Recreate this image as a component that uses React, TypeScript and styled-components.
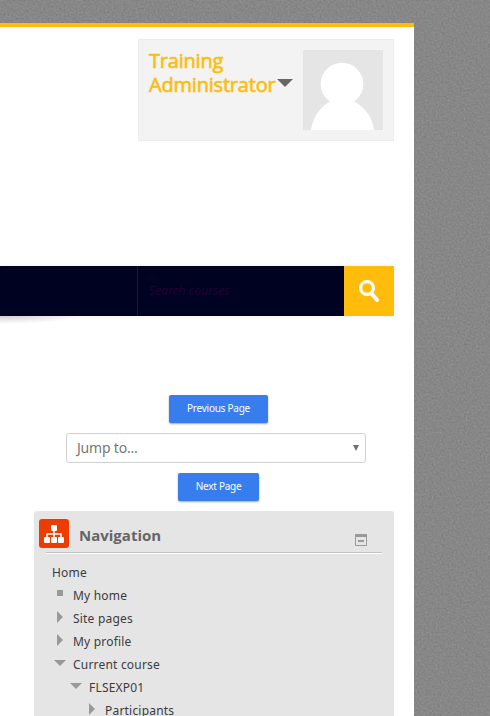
import React from 'react';
import styled, { createGlobalStyle } from 'styled-components';

const concrete = encodeURIComponent(
  `<svg xmlns="http://www.w3.org/2000/svg" width="490" height="716"><filter id="n" x="0" y="0" width="100%" height="100%" color-interpolation-filters="sRGB"><feTurbulence type="fractalNoise" baseFrequency=".5" numOctaves="3" seed="8"/><feColorMatrix values=".1 .06 0 0 .448 .1 .06 0 0 .448 .1 .06 0 0 .448 0 0 0 0 1"/></filter><rect width="490" height="716" filter="url(#n)"/></svg>`
);

const GlobalStyle = createGlobalStyle`
  * { box-sizing: border-box; }
  body {
    margin: 0;
    overflow: hidden;
    background: #858585 url("data:image/svg+xml,${concrete}");
    font-family: "Open Sans", sans-serif;
  }
`;

const Page = styled.main`
  width: 414px;
  height: 693px;
  margin-top: 23px;
  border-top: 4px solid #ffbc0b;
  background: #fff;
  padding: 12px 20px 0 0;
  overflow: hidden;
`;

const UserCard = styled.section`
  width: 256px;
  height: 102px;
  margin-left: auto;
  padding: 10px;
  display: flex;
  justify-content: space-between;
  background: #f3f3f3;
  border: 1px solid #ededed;
`;

const UserMenu = styled.div`
  display: flex;
  align-items: flex-end;
  height: 46px;
  gap: 2px;
`;

const UserName = styled.div`
  width: 126px;
  font-size: 20px;
  line-height: 24px;
  height: 47px;
  color: #ffbc0b;
  -webkit-text-stroke: 0.6px #ffbc0b;
  letter-spacing: -0.2px;
`;

const Triangle = styled.span<{ $dir: 'down' | 'right'; $w: number; $h: number; $color: string }>`
  flex: none;
  width: ${p => p.$w}px;
  height: ${p => p.$h}px;
  background: ${p => p.$color};
  clip-path: ${p => (p.$dir === 'down' ? 'polygon(0 0, 100% 0, 50% 100%)' : 'polygon(0 0, 100% 50%, 0 100%)')};
`;

const UserCaret = styled(Triangle)`
  margin-bottom: 9px;
`;

const Avatar = styled.svg`
  display: block;
  width: 80px;
  height: 80px;
  background: #e5e5e5;
`;

const SearchBar = styled.div`
  display: flex;
  height: 50px;
  margin-top: 125px;
  background: #000221;
  box-shadow: 0 0 5px rgba(0, 0, 0, 0.07);
  width: 394px;
`;

const BarShade = styled.div`
  width: 80px;
  height: 8px;
  background: radial-gradient(ellipse 80px 8px at 0 0, rgba(0, 0, 0, 0.17), rgba(0, 0, 0, 0));
`;

const MenuSpace = styled.div`
  width: 138px;
  border-right: 1px solid #191b37;
`;

const SearchText = styled.div`
  flex: 1;
  padding-left: 11px;
  font: italic 12px/50px "Open Sans", sans-serif;
  letter-spacing: 0.12px;
  color: #250034;
`;

const SearchButton = styled.button`
  width: 50px;
  padding: 0;
  border: 0;
  background: #ffbc0b;
  svg { display: block; }
`;

const PageNav = styled.nav`
  display: flex;
  flex-direction: column;
  align-items: center;
  gap: 10px;
  margin-top: 71px;
  padding-left: 42px;
`;

const PageButton = styled.button<{ $w: number }>`
  width: ${p => p.$w}px;
  height: 28px;
  padding: 0 0 2px;
  border: 0;
  border-radius: 2px;
  background: #377dee;
  color: #fff;
  font: 10px/26px "Noto Sans", sans-serif;
  letter-spacing: -0.25px;
  box-shadow: 0 1px 2px rgba(0, 0, 0, 0.35);
  margin-left: 1px;
`;

const JumpSelect = styled.div`
  width: 300px;
  height: 30px;
  margin-right: 4px;
  padding: 0 6px 0 10px;
  display: flex;
  align-items: center;
  justify-content: space-between;
  border: 1px solid #d0d0d0;
  border-radius: 3px;
  color: #777;
  font: 14px/28px "Noto Sans", sans-serif;
  letter-spacing: -0.2px;
`;

const Block = styled.section`
  width: 360px;
  height: 220px;
  margin: 10px 0 0 34px;
  padding: 8px 12px 0 5px;
  border-radius: 3px 3px 0 0;
  background: #e5e5e5;
`;

const BlockHeader = styled.header`
  display: flex;
  height: 33px;
`;

const BlockIcon = styled.svg`
  display: block;
  width: 30px;
  height: 29px;
  background: #ec3c00;
  border-radius: 3px;
`;

const BlockTitle = styled.h2`
  flex: 1;
  margin: 0 0 0 10px;
  font: bold 15px/33px "Open Sans", sans-serif;
  color: #666;
`;

const Collapse = styled.svg`
  display: block;
  width: 12px;
  height: 12px;
  margin: 15px 15px 0 0;
`;

const Divider = styled.div`
  height: 2px;
  margin-left: 7px;
  border-top: 1px solid #c2c2c2;
  border-bottom: 1px solid #fff;
`;

const Tree = styled.ul`
  list-style: none;
  margin: 7px 0 0;
  padding: 0;
`;

const TreeItem = styled.li<{ $level: number }>`
  display: flex;
  height: 23px;
  padding-left: ${p => (p.$level === 0 ? 13 : p.$level * 16 - 2)}px;
  font: 12px/23px "Noto Sans", sans-serif;
  letter-spacing: 0.2px;
  color: #3c3c3c;
`;

const Marker = styled.span`
  display: flex;
  justify-content: center;
  width: 14px;
  height: 20px;
  align-items: center;
  margin-right: 6px;
`;

const Square = styled.span`
  width: 6px;
  height: 6px;
  margin-bottom: 2px;
  background: #999;
`;

type Kind = 'none' | 'leaf' | 'closed' | 'open';
const items: { label: string; level: number; kind: Kind }[] = [
  { label: 'Home', level: 0, kind: 'none' },
  { label: 'My home', level: 1, kind: 'leaf' },
  { label: 'Site pages', level: 1, kind: 'closed' },
  { label: 'My profile', level: 1, kind: 'closed' },
  { label: 'Current course', level: 1, kind: 'open' },
  { label: 'FLSEXP01', level: 2, kind: 'open' },
  { label: 'Participants', level: 3, kind: 'closed' },
];

export default function App() {
  return (
    <>
      <GlobalStyle />
      <Page>
        <UserCard>
          <UserMenu>
            <UserName>Training Administrator</UserName>
            <UserCaret $dir="down" $w={16} $h={8} $color="#666" />
          </UserMenu>
          <Avatar viewBox="0 0 80 80">
            <g fill="#fff">
              <circle cx="39" cy="34" r="21.3" />
              <path d="M8 80C10 66 18 56 28 51H50C61 56 69 66 71 80Z" />
            </g>
          </Avatar>
        </UserCard>
        <SearchBar>
          <MenuSpace />
          <SearchText>Search courses</SearchText>
          <SearchButton aria-label="Search">
            <svg width="50" height="50" fill="none" stroke="#fff">
              <circle cx="23" cy="22" r="6.4" strokeWidth="3.2" />
              <path d="M27.5 27.5L33 34" strokeWidth="4" strokeLinecap="round" />
            </svg>
          </SearchButton>
        </SearchBar>
        <BarShade />
        <PageNav>
          <PageButton $w={99}>Previous Page</PageButton>
          <JumpSelect>
            Jump to...
            <Triangle $dir="down" $w={6} $h={6} $color="#707070" />
          </JumpSelect>
          <PageButton $w={81}>Next Page</PageButton>
        </PageNav>
        <Block>
          <BlockHeader>
            <BlockIcon viewBox="0 0 30 29">
              <g fill="#fff">
                <rect x="12" y="6" width="6" height="6" rx="1" />
                <rect x="5" y="18" width="6" height="6" rx="1" />
                <rect x="12" y="18" width="6" height="6" rx="1" />
                <rect x="19" y="18" width="6" height="6" rx="1" />
              </g>
              <path d="M15 11V19M8 19V15H22V19" fill="none" stroke="#fff" strokeWidth="1.5" />
            </BlockIcon>
            <BlockTitle>Navigation</BlockTitle>
            <Collapse viewBox="0 0 12 12">
              <path d="M.5 1H11.5V11.5H.5Z" fill="none" stroke="#999" />
              <path d="M0 0H12V3H0ZM3 6H9V8H3Z" fill="#999" />
            </Collapse>
          </BlockHeader>
          <Divider />
          <Tree>
            {items.map(({ label, level, kind }) => (
              <TreeItem key={label} $level={level}>
                {kind !== 'none' && (
                  <Marker>
                    {kind === 'leaf' && <Square />}
                    {kind === 'closed' && <Triangle $dir="right" $w={6} $h={12} $color="#999" />}
                    {kind === 'open' && <Triangle $dir="down" $w={12} $h={6} $color="#999" />}
                  </Marker>
                )}
                {label}
              </TreeItem>
            ))}
          </Tree>
        </Block>
      </Page>
    </>
  );
}
